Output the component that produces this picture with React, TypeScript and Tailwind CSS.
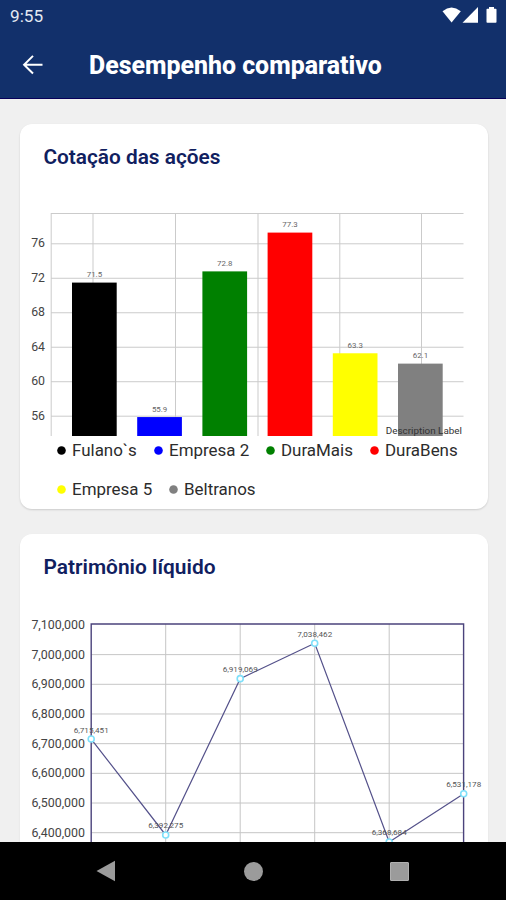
const bars = [
  { name: "Fulano`s", value: 71.5, color: "#000000" },
  { name: "Empresa 2", value: 55.9, color: "#0000ff" },
  { name: "DuraMais", value: 72.8, color: "#008000" },
  { name: "DuraBens", value: 77.3, color: "#ff0000" },
  { name: "Empresa 5", value: 63.3, color: "#ffff00" },
  { name: "Beltranos", value: 62.1, color: "#808080" },
];

const points = [6715451, 6392275, 6919069, 7038462, 6368684, 6531178];

const barY = (v: number) => 212.2 - (v - 56) * 8.62;
const lineY = (v: number) => 218.7 - ((v - 6400000) / 100000) * 29.68;
const lineX = (i: number) => 71.2 + i * 74.5;

function BarChart() {
  return (
    <svg width="468" height="233" className="block font-[Roboto,sans-serif]">
      <g stroke="#cbcbcb" strokeWidth="1">
        <path d="M31 9.5H443.5" />
        {[76, 72, 68, 64, 60, 56].map((v) => (
          <path key={v} d={`M31 ${barY(v)}H443.5`} />
        ))}
        {[31.2, 73, 155.5, 238, 319.8, 401.5].map((x) => (
          <path key={x} d={`M${x} 9V232`} />
        ))}
      </g>
      {[76, 72, 68, 64, 60, 56].map((v) => (
        <text key={v} x="25" y={barY(v) + 3.6} textAnchor="end" fontSize="12.3" fill="#444">
          {v}
        </text>
      ))}
      {bars.map((b, i) => (
        <g key={b.name}>
          <rect x={52 + i * 65.2} y={barY(b.value)} width="44.7" height={232 - barY(b.value)} fill={b.color} />
          <text x={74.4 + i * 65.2} y={barY(b.value) - 5.5} textAnchor="middle" fontSize="7.9" fill="#666">
            {b.value.toFixed(1)}
          </text>
        </g>
      ))}
      <text x="442" y="229.5" textAnchor="end" fontSize="9.9" fill="#333">
        Description Label
      </text>
    </svg>
  );
}

function LineChart() {
  return (
    <svg width="468" height="260" className="block font-[Roboto,sans-serif]">
      <g stroke="#c6c6c6" strokeWidth="1">
        {[7, 6.9, 6.8, 6.7, 6.6, 6.5, 6.4].map((v) => (
          <path key={v} d={`M71 ${lineY(v * 1000000)}H443.5`} />
        ))}
        {[1, 2, 3, 4].map((i) => (
          <path key={i} d={`M${lineX(i)} 10V260`} />
        ))}
      </g>
      {[7.1, 7, 6.9, 6.8, 6.7, 6.6, 6.5, 6.4].map((v) => (
        <text key={v} x="65" y={lineY(v * 1000000) + 4} textAnchor="end" fontSize="12.4" fill="#444">
          {Math.round(v * 1000000).toLocaleString("en-US")}
        </text>
      ))}
      <path d="M71.2 260V10H443.6V260" fill="none" stroke="#4b437c" strokeWidth="1.4" />
      <polyline
        points={points.map((v, i) => `${lineX(i)},${lineY(v)}`).join(" ")}
        fill="none"
        stroke="#54518a"
        strokeWidth="1.2"
      />
      {points.map((v, i) => (
        <g key={v}>
          <circle cx={lineX(i)} cy={lineY(v)} r="3" fill="#fff" stroke="#7fe0fa" strokeWidth="1.6" />
          <text x={lineX(i)} y={lineY(v) - 6.5} textAnchor="middle" fontSize="8.1" fill="#555">
            {v.toLocaleString("en-US")}
          </text>
        </g>
      ))}
    </svg>
  );
}

function Legend({ name, color, className }: { name: string; color: string; className: string }) {
  return (
    <li className={`flex items-center gap-[6.5px] ${className}`}>
      <svg width="9" height="9">
        <circle cx="4.5" cy="4.5" r="4.3" fill={color} />
      </svg>
      {name}
    </li>
  );
}

export default function App() {
  return (
    <div className="flex flex-col h-[900px] w-[506px] overflow-hidden bg-[#f0f0f0] font-[Roboto,sans-serif]">
      <header className="h-[99px] shrink-0 bg-[#12306b] border-b border-[#08005a] text-white">
        <div className="flex h-8 items-center justify-between pl-[10px] pr-2">
          <span className="text-[17.2px] leading-5 text-[#e4e9f2]">9:55</span>
          <svg width="56" height="18" fill="#fff">
            <path d="M0.5 4.2Q9.5 -3.2 18.8 4.2L9.6 15.5Z" />
            <path d="M36 0V15.8H20.5Z" />
            <path d="M44.5 15V2.5Q44.5 1.7 45.3 1.7H47V0H52V1.7H53.7Q54.5 1.7 54.5 2.5V15Q54.5 15.8 53.7 15.8H45.3Q44.5 15.8 44.5 15Z" />
          </svg>
        </div>
        <div className="flex h-[66px] items-center pl-[22px]">
          <svg width="22" height="20" fill="none" stroke="#fff" strokeWidth="2">
            <path d="M20.5 9.7H2M11 0.9L2.1 9.7L11 18.5" />
          </svg>
          <h1 className="ml-[45px] mt-px text-[24.9px] font-extrabold leading-7 whitespace-nowrap">Desempenho comparativo</h1>
        </div>
      </header>

      <main className="flex min-h-0 grow flex-col gap-[25px] overflow-hidden pl-[19.5px] pr-[18px] pt-[24.5px]">
        <section className="h-[385px] shrink-0 rounded-xl bg-white shadow-[0_1px_2px_rgba(0,0,0,0.15)]">
          <h2 className="h-20 pl-6 pt-[21px] text-[20.8px] font-semibold leading-6 text-[#10205f]">Cotação das ações</h2>
          <BarChart />
          <ul className="flex flex-wrap pl-[37px] text-[16.95px] leading-[39.5px] -mt-[6px] text-[#2c2c2c]">
            <Legend name={bars[0].name} color={bars[0].color} className="w-[97px]" />
            <Legend name={bars[1].name} color={bars[1].color} className="w-[112px]" />
            <Legend name={bars[2].name} color={bars[2].color} className="w-[104px]" />
            <Legend name={bars[3].name} color={bars[3].color} className="w-[100px]" />
            <Legend name={bars[4].name} color={bars[4].color} className="w-[112px]" />
            <Legend name={bars[5].name} color={bars[5].color} className="w-[104px]" />
          </ul>
        </section>
        <section className="h-[385px] shrink-0 rounded-xl bg-white shadow-[0_1px_2px_rgba(0,0,0,0.08)]">
          <h2 className="h-20 pl-6 pt-[21px] text-[20.9px] font-semibold leading-6 text-[#10205f]">Patrimônio líquido</h2>
          <LineChart />
        </section>
      </main>

      <nav className="flex h-[58px] shrink-0 items-center justify-between bg-black pl-[96px] pr-[97px]">
        <svg width="20" height="22" fill="#9b9b9b">
          <path d="M0.5 11L19 0.7V21.3Z" />
        </svg>
        <div className="h-[19px] w-[19px] rounded-full bg-[#9b9b9b]" />
        <div className="h-[19px] w-[19px] rounded-[1px] border border-[#b0b0b0] bg-[#9b9b9b]" />
      </nav>
    </div>
  );
}
